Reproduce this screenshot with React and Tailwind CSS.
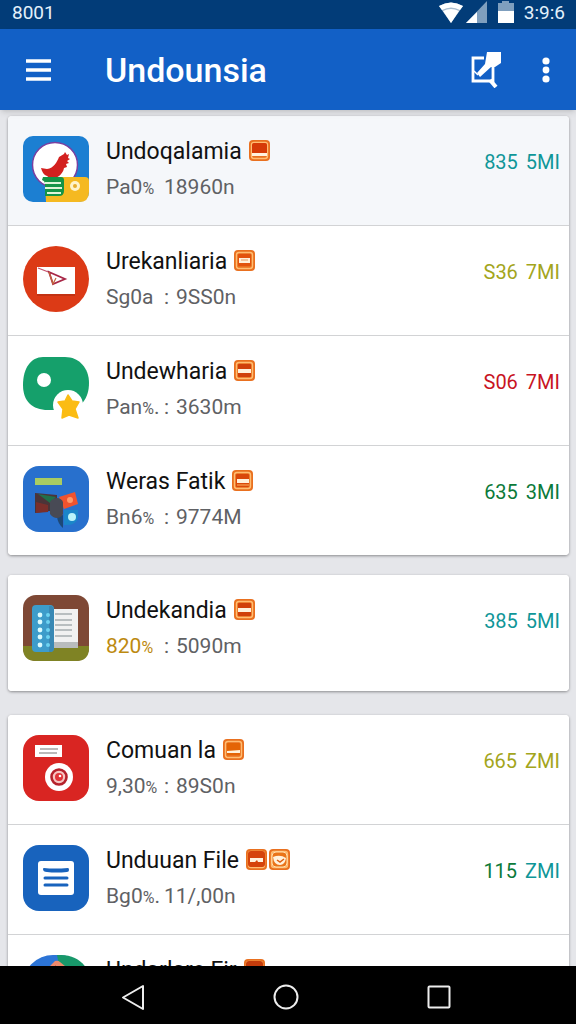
import React from 'react'

// groups of installed apps, one card per group
const GROUPS = [
  [
    { icon: 'bird', name: 'Undoqalamia', label: 'Pa0%', value: '18960n', badges: ['tray'], size: ['835', '5MI'], tone: 'text-[#0f9698]', active: true },
    { icon: 'mail', name: 'Urekanliaria', label: 'Sg0a', sep: ':', value: '9SS0n', badges: ['card'], size: ['S36', '7MI'], tone: 'text-[#a3a51c]' },
    { icon: 'star', name: 'Undewharia', label: 'Pan%.', sep: ':', value: '3630m', badges: ['minus'], size: ['S06', '7MI'], tone: 'text-[#c8141f]' },
    { icon: 'tools', name: 'Weras Fatik', label: 'Bn6%', sep: ':', value: '9774M', badges: ['low'], size: ['635', '3MI'], tone: 'text-[#0b7a3a]' }
  ],
  [
    { icon: 'book', name: 'Undekandia', label: '820%', labelTone: 'text-[#bd8a10]', sep: ':', value: '5090m', badges: ['minus'], size: ['385', '5MI'], tone: 'text-[#0f9698]' }
  ],
  [
    { icon: 'camera', name: 'Comuan la', label: '9,30%', sep: ':', value: '89S0n', badges: ['flat'], size: ['665', 'ZMI'], tone: 'text-[#a3a51c]' },
    { icon: 'doc', name: 'Unduuan File', label: 'Bg0%.', value: '11/,00n', badges: ['mask', 'face'], size: ['115', 'ZMI'], tone: 'text-[#0b7a3a]', unitTone: 'text-[#0f9698]' },
    { icon: 'globe', name: 'Undarlare Fir', label: 'Pa0%', sep: ':', value: '3630m', badges: ['plain'], size: ['635', 'ZMI'], tone: 'text-[#0b7a3a]' }
  ]
]

const ICONS = {
  bird: (
    <>
      <rect width="66" height="66" rx="10" fill="#1c7fd2" />
      <circle cx="32" cy="29" r="22.5" fill="#fff" stroke="#7a3fa0" strokeWidth="1.5" />
      <path d="M18 32l6 1c7-1 10-7 12-12l5-3 1-2 2 3 2-1-1 4 2 1-3 2 2 2-3 1 1 3-3 1c-1 6-6 10-13 11l-4-3c-3-1-5-4-6-8z" fill="#d3201f" />
      <path d="M22 45q0-4 4-4h36q4 0 4 4v11q0 10-10 10H23z" fill="#f5b921" />
      <path d="M20 41h18q3 0 3 3v11q0 5-5 5H22V48q0-3-3-4z" fill="#159447" />
      <path d="M22 47h16M22 52h17M24 57h14" stroke="#dff5d8" strokeWidth="2" />
      <circle cx="52" cy="50" r="5" fill="#fff3c9" />
      <circle cx="52" cy="50" r="2" fill="#e7ad2c" />
    </>
  ),
  mail: (
    <>
      <circle cx="33" cy="33" r="33" fill="#dc3a16" />
      <path d="M14 21h38v27H14z" fill="#fff" />
      <path d="M14 48h38v2H14z" fill="#c23213" />
      <path d="M15 22l13 5" fill="none" stroke="#c4506a" strokeWidth="1.2" />
      <path d="M26 26l16 7-12 5z" fill="none" stroke="#a82747" strokeWidth="1.8" />
      <path d="M26 26l4 12 3-6" fill="none" stroke="#c2653b" strokeWidth="1.2" />
    </>
  ),
  star: (
    <>
      <path d="M20 1h22c14 0 24 11 24 26 0 14-7 27-24 27H25C9 54 0 45 0 29 0 12 8 1 20 1z" fill="#15a06b" />
      <circle cx="21" cy="24" r="7" fill="#fff" />
      <circle cx="45" cy="49" r="15" fill="#fff" />
      <path d="M45 39l4 6 7 1-4 7 3 9-9-3-7 3 1-9-5-7 7-1z" fill="#fbbc13" stroke="#fbbc13" strokeWidth="1.5" strokeLinejoin="round" />
    </>
  ),
  tools: (
    <>
      <rect width="66" height="66" rx="16" fill="#2870cd" />
      <path d="M12 12h27v7H12z" fill="#a9cc62" />
      <path d="M12 27l22 2v15l-22 3z" fill="#4b3438" />
      <path d="M13 36l12 3v7l-12 1z" fill="#7a2f2b" />
      <path d="M15 28l18 3-6 6z" fill="#22704b" />
      <path d="M36 31l16-5 3 12-14 5z" fill="#f0532f" />
      <circle cx="47" cy="34" r="3" fill="#ff9a6b" />
      <path d="M41 44h14v8q-2 8-14 7z" fill="#1b86c9" />
      <path d="M34 51l6-2v13q-5-4-6-11z" fill="#1d4877" />
      <path d="M27 36q3-4 7-4t6 4v12q-2 4-6 4t-7-4z" fill="#484a55" />
      <circle cx="49" cy="51" r="4" fill="#baf3fa" />
    </>
  ),
  book: (
    <>
      <rect width="66" height="66" rx="13" fill="#7e4835" />
      <path d="M0 51h66v2q0 13-13 13H13Q0 66 0 53z" fill="#7f8324" />
      <path d="M29 14h26v38H29z" fill="#f1f1f1" />
      <path d="M29 47h26v6H29z" fill="#b9bcbd" />
      <path d="M32 19h17M32 25h17M32 30h17M32 35h17M32 41h17" stroke="#a7adb0" strokeWidth="1.5" />
      <rect x="9" y="10" width="22" height="47" rx="4" fill="#3d9cca" />
      <path d="M26 11h3q2 1 2 4v38q0 3-3 4h-2z" fill="#3988b4" />
      {[20, 27, 35, 42, 50].map((y) => (
        <g key={y}>
          <circle cx="17" cy={y} r="2.4" fill="#d9fbff" />
          <circle cx="25" cy={y} r="2" fill="#6dd3f1" />
        </g>
      ))}
    </>
  ),
  camera: (
    <>
      <rect width="66" height="66" rx="16" fill="#d92522" />
      <path d="M12 10h27v12H12z" fill="#fff" />
      <path d="M17 14h18M16 18h18" stroke="#777" strokeWidth="1.2" />
      <circle cx="36" cy="42" r="14" fill="#fff" />
      <circle cx="36" cy="42" r="7.5" fill="#f6c4c0" stroke="#b5212b" strokeWidth="2.6" />
      <circle cx="36" cy="42" r="4" fill="#e03439" />
      <circle cx="37" cy="41" r="1.3" fill="#fff" />
    </>
  ),
  doc: (
    <>
      <rect width="66" height="66" rx="16" fill="#1863bd" />
      <rect x="15" y="16" width="36" height="34" rx="3" fill="#fff" />
      <path d="M21 23q10 1 24 0 1 0 1 2t-2 2q-11 1-20 0-4 0-4-3 0-1 1-1z" fill="#1863bd" />
      <path d="M22 33h22M22 40h22" stroke="#1863bd" strokeWidth="3" strokeLinecap="round" />
    </>
  ),
  globe: (
    <>
      <rect width="66" height="66" rx="30" fill="#2c74d6" />
      <path d="M34 0h4c14 0 25 8 28 20v20H42z" fill="#18986a" />
      <path d="M22 16l10-10q3-1 5 1l11 9v24H22z" fill="#ef8a6c" />
      <path d="M33 10l-13 14h12z" fill="#d83a31" />
    </>
  )
}

const BADGES = {
  tray: (
    <>
      <rect x="3" y="3" width="15" height="12" rx="2" fill="#d63a07" />
      <path d="M3 13h15v3H3z" fill="#fff1dc" />
    </>
  ),
  card: (
    <>
      <rect x="4" y="4" width="13" height="12" rx="1" fill="#e2530d" />
      <path d="M5 8h11v5H5z" fill="#fff1dc" />
      <path d="M7 10h7" stroke="#e79b63" />
    </>
  ),
  minus: (
    <>
      <rect x="4" y="4" width="13" height="13" rx="1" fill="#d0400a" />
      <path d="M4 9h13v4H4z" fill="#fff1dc" />
    </>
  ),
  low: (
    <>
      <rect x="4" y="4" width="13" height="13" rx="1" fill="#d9480b" />
      <path d="M5 9h12v4H5z" fill="#fff1dc" />
      <path d="M5 15h12" stroke="#ffb45f" />
    </>
  ),
  flat: (
    <>
      <rect x="4" y="4" width="13" height="12" rx="1" fill="#e46405" />
      <path d="M4 12l13-1v3H4z" fill="#fff1dc" />
    </>
  ),
  mask: (
    <>
      <rect x="2" y="2" width="17" height="16" rx="3" fill="#d5430b" />
      <path d="M4 9h13v4h-5l-1-2-2 2H4z" fill="#fff1dc" />
    </>
  ),
  face: (
    <>
      <rect x="3" y="3" width="15" height="15" rx="4" fill="#ea7419" stroke="#ffe1b0" />
      <path d="M4 8q7-3 13 1-1 7-6 7-6 0-7-8z" fill="#fff1dc" />
      <path d="M8 11l3 2 4-3" fill="none" stroke="#dd5d10" strokeWidth="1.5" />
    </>
  ),
  plain: <rect x="2" y="2" width="17" height="17" rx="3" fill="#c43c0c" />
}

function AppIcon({ kind }) {
  return (
    <svg viewBox="0 0 66 66" className="size-[66px] shrink-0" aria-hidden="true">
      {ICONS[kind]}
    </svg>
  )
}

function NameBadge({ kind }) {
  return (
    <svg viewBox="0 0 21 21" className="size-[21px] shrink-0" aria-hidden="true">
      <rect width="21" height="21" rx="4" fill="#e9701f" />
      <rect x="2.5" y="2.5" width="16" height="16" rx="2.5" fill="none" stroke="#ffbd72" strokeWidth="1.4" />
      {BADGES[kind]}
    </svg>
  )
}

// the percent sign is set smaller than the digits round it
function Label({ text, tone }) {
  const [head, tail] = text.split('%')
  return (
    <span className={tone}>
      {head}
      {tail !== undefined && <span className="text-base">%</span>}
      {tail}
    </span>
  )
}

function AppRow({ app, single }) {
  return (
    <li className={`flex items-start gap-[17px] pt-5 pl-[15px] pr-[9px] ${single ? 'pb-[30px]' : 'pb-[23px]'} ${app.active ? 'bg-[#f5f7fa]' : 'bg-white'}`}>
      <AppIcon kind={app.icon} />
      <div className="min-w-0 flex-1">
        <div className="flex items-center gap-[7px]">
          <h2 className="text-[23px] leading-8 text-[#111] whitespace-nowrap">{app.name}</h2>
          <div className="flex gap-[2px] pb-1">
            {app.badges.map((b) => <NameBadge key={b} kind={b} />)}
          </div>
        </div>
        <p className="mt-[5px] flex text-[21px] leading-7 text-[#5f6164] whitespace-nowrap">
          <span className="min-w-[58px]"><Label text={app.label} tone={app.labelTone} /></span>
          {app.sep && <span className="w-3">{app.sep}</span>}
          <span>{app.value}</span>
        </p>
      </div>
      <p className={`mt-[14px] flex gap-2 text-[20px] leading-6 ${app.tone}`}>
        <span>{app.size[0]}</span>
        <span className={app.unitTone}>{app.size[1]}</span>
      </p>
    </li>
  )
}

function StatusBar() {
  return (
    <div className="flex h-[29px] shrink-0 items-center justify-between bg-[#023c78] pl-3 pr-[11px] pb-1 text-[19px] leading-6 text-[#e4f1fb]">
      <span>8001</span>
      <div className="flex items-center">
        <svg width="86" height="24" viewBox="0 0 86 24" aria-hidden="true">
          <path d="M1 5q12-7 24 0L13 22z" fill="#a9bdd0" />
          <path d="M1 5q12-7 24 0l-3 4q-9-5-18 0z" fill="#fff" />
          <path d="M5 10q8-4 16 0l-8 12z" fill="#fff" />
          <path d="M49 0v22H28z" fill="#7f9fbe" />
          <path d="M39 11v11H28z" fill="#fff" />
          <path d="M60 2h4V0h7v2h5v8H60z" fill="#7f9fbe" />
          <path d="M60 10h16v12H60z" fill="#fff" />
        </svg>
        <span>3:9:6</span>
      </div>
    </div>
  )
}

function TopBar() {
  return (
    <header className="relative z-10 flex h-[81px] shrink-0 items-center bg-[#1260c6] px-[26px] text-white shadow-md">
      <button type="button" aria-label="Menu">
        <svg width="25" height="22" viewBox="0 0 25 22" stroke="currentColor" strokeWidth="3.4">
          <path d="M0 2h25M0 11h25M0 20h25" />
        </svg>
      </button>
      <h1 className="ml-[54px] flex-1 text-[34px] leading-10 font-medium">Undounsia</h1>
      <button type="button" aria-label="Edit">
        <svg width="32" height="36" viewBox="0 0 32 36" fill="none" stroke="currentColor">
          <path d="M14 6H3v23h20V15" strokeWidth="2.8" />
          <path d="M17 0h14v11l-6 4h-4L10 25l-3-4 8-9z" fill="currentColor" stroke="none" />
          <path d="M4 19l4 4" strokeWidth="1.5" />
          <path d="M20 28l6 7" strokeWidth="4" />
        </svg>
      </button>
      <button type="button" aria-label="More options" className="ml-10">
        <svg width="8" height="26" viewBox="0 0 8 26" fill="currentColor">
          <circle cx="4" cy="4" r="3.6" />
          <circle cx="4" cy="13" r="3.4" />
          <circle cx="4" cy="22" r="3.6" />
        </svg>
      </button>
    </header>
  )
}

function NavBar() {
  return (
    <nav className="flex h-[58px] shrink-0 items-center justify-center gap-32 bg-black pt-1 pr-1 text-[#ededed]">
      <button type="button" aria-label="Back">
        <svg width="24" height="26" viewBox="0 0 24 26" fill="none" stroke="currentColor" strokeWidth="2" strokeLinejoin="round">
          <path d="M22 2v23L2 13.500z" />
        </svg>
      </button>
      <button type="button" aria-label="Home">
        <svg width="26" height="26" viewBox="0 0 26 26" fill="none" stroke="currentColor" strokeWidth="2">
          <circle cx="13" cy="13" r="11.500" />
        </svg>
      </button>
      <button type="button" aria-label="Recent apps">
        <svg width="24" height="24" viewBox="0 0 24 24" fill="none" stroke="currentColor" strokeWidth="2">
          <rect x="1.500" y="1.500" width="21" height="21" rx="1" />
        </svg>
      </button>
    </nav>
  )
}

export default function App() {
  return (
    <div className="flex h-screen flex-col bg-[#e5e6ea] font-[Roboto,sans-serif]">
      <StatusBar />
      <TopBar />
      <main className="flex min-h-0 flex-1 flex-col gap-5 overflow-hidden pt-[6px] pl-2 pr-[7px]">
        {GROUPS.map((apps) => {
          const single = apps.length === 1
          return (
            <ul
              key={apps[0].name}
              className={`shrink-0 divide-y divide-[#d2d3d5] overflow-hidden rounded-[4px] bg-white shadow-[0_1px_3px_rgba(0,0,0,0.4)] ${single ? 'mb-1' : ''}`}
            >
              {apps.map((app) => <AppRow key={app.name} app={app} single={single} />)}
            </ul>
          )
        })}
      </main>
      <NavBar />
    </div>
  )
}
